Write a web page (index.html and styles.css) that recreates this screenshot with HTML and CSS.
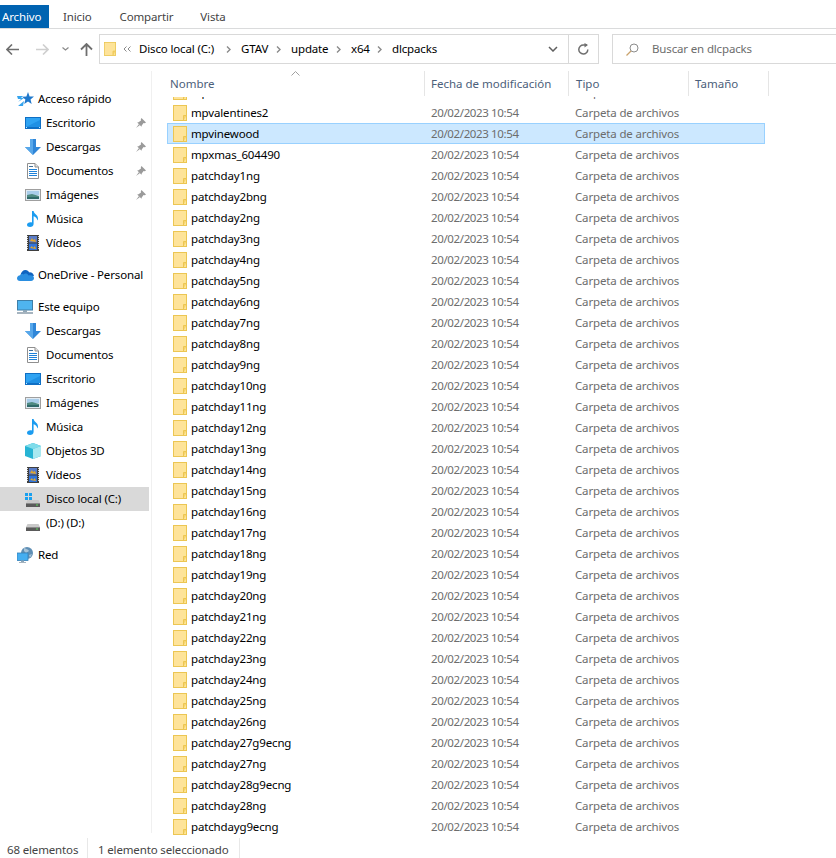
FILE: index.html
```html
<!DOCTYPE html>
<html lang="es">
<head>
<meta charset="utf-8">
<title>dlcpacks</title>
<link rel="stylesheet" href="styles.css">
</head>
<body>
<svg class="defs" width="0" height="0" aria-hidden="true">
  <defs>
    <symbol id="folder" viewBox="0 0 14 16">
      <rect x="0.5" y="0.5" width="13" height="15" fill="#fde597" stroke="#ecc653"/>
      <rect x="1" y="1" width="9" height="14" fill="#fee39a"/>
      <path d="M10.5 15.5V10.5H13.5" fill="#f6d36c" stroke="#ecc653"/>
    </symbol>
    <symbol id="star" viewBox="0 0 17 16">
      <path d="M11 1l1.600 4.400 4.400.2-3.500 2.900 1.200 4.500-3.700-2.600-3.800 2.600 1.200-4.400L5 5.700l4.400-.2z" fill="#1f78cc"/>
      <path d="M0 5h6L4 7h3L1 11l3-3H1zM1 15l6-5-1 5z" fill="#35a4ee"/>
    </symbol>
    <symbol id="desktop" viewBox="0 0 16 12">
      <rect x="0" y="0" width="16" height="12" fill="#0f6fc4"/>
      <rect x="1" y="1" width="14" height="9" fill="#2fa3f2"/>
      <path d="M1 10L15 3v7z" fill="#1f90e4"/>
      <rect x="1" y="10" width="1" height="1" fill="#bfe4ff"/><rect x="14" y="10" width="1" height="1" fill="#bfe4ff"/>
    </symbol>
    <symbol id="down" viewBox="0 0 16 16">
      <path d="M5 0h6v8h5l-8 8-8-8h5z" fill="#2f86d8"/>
      <path d="M5 0h3v16l-8-8h5z" fill="#57a7ea"/>
    </symbol>
    <symbol id="doc" viewBox="0 0 12 16">
      <path d="M.5.5h7.500l3.500 3.500v11.500h-11z" fill="#fff" stroke="#8f8f8f"/>
      <path d="M8 .5V4h3.500" fill="#e4e4e4" stroke="#8f8f8f"/>
      <path d="M2 6.500h8M2 8.500h8M2 10.500h8M2 12.500h8" stroke="#1f82d8"/>
      <path d="M2 3.500h4" stroke="#3d6f99"/>
    </symbol>
    <symbol id="pics" viewBox="0 0 16 12">
      <rect x=".5" y=".5" width="15" height="11" fill="#dfeaf3" stroke="#9f9f9f"/>
      <rect x="2" y="2" width="12" height="4" fill="#a9cdea"/>
      <path d="M2 6l5-1 7 2v3H2z" fill="#4f8a82"/>
      <path d="M2 8h12v2H2z" fill="#2f6a6a"/>
    </symbol>
    <symbol id="music" viewBox="0 0 12 16">
      <path d="M5 0h1.600c.4 3 4.400 3.500 4.400 7.500 0 1-.3 1.500-.7 2 .1-2.500-2-3.800-3.700-4.300V13c0 2-1.700 3-3.500 3C1.200 16 0 15 0 13.700s1.500-2.500 3.500-2.500c.6 0 1.100.1 1.500.3z" fill="#1b9cf0"/>
    </symbol>
    <symbol id="video" viewBox="0 0 12 16">
      <rect width="12" height="16" fill="#3f3f3f"/>
      <path d="M.5 1v14M11.500 1v14" stroke="#d8d8d8" stroke-dasharray="1 1"/>
      <rect x="2" y="1" width="8" height="6.500" fill="#5a7cc8"/>
      <rect x="2" y="8.500" width="8" height="6.500" fill="#2f74dc"/>
      <path d="M3 6l2-3 1 2 2-1 1 3zM3 13l2-2 1 2 2-2 1 3z" fill="#e0a52e"/>
    </symbol>
    <symbol id="cloud" viewBox="0 0 17 12">
      <path d="M3.500 6C4 3 6 1 8.500 1c1.800 0 3 1 3.700 2.400 2.400-.3 4.300 1.300 4.800 3.600H3.500z" fill="#0f64c0"/>
      <path d="M3 12C1 12 0 10.800 0 9.300 0 7.800 1.300 6.500 3.200 6.300 4 5 5.500 4.800 6.500 5.400 8 4 10.500 4.500 11.500 6.500c2-.4 5.500-.2 5.500 2.500 0 1.600-1.100 3-3 3z" fill="#2a8ee0"/>
    </symbol>
    <symbol id="pc" viewBox="0 0 16 14">
      <rect x=".5" y=".5" width="15" height="9.500" fill="#4fb4ef" stroke="#3f7fa8"/>
      <rect x="6" y="10" width="4" height="2" fill="#8fa7b8"/>
      <rect x="0" y="12" width="16" height="2" fill="#a6b4bf"/>
    </symbol>
    <symbol id="cube" viewBox="0 0 16 16">
      <path d="M8 0l8 3v10l-8 3-8-3V3z" fill="#27b4d4"/>
      <path d="M8 0l8 3-8 3-8-3z" fill="#7fdcea"/>
      <path d="M8 6l8-3v10l-8 3z" fill="#a8e8f0"/>
    </symbol>
    <symbol id="drive" viewBox="0 0 14 7">
      <path d="M1.500 0h11L14 3v4H0V3z" fill="#c9c9c9"/>
      <rect x="0" y="3" width="14" height="4" fill="#5a5a5a"/>
      <rect x="0" y="3" width="14" height="1" fill="#8a8a8a"/>
      <rect x="10" y="4.500" width="2" height="1" fill="#5bd85b"/>
    </symbol>
    <symbol id="win" viewBox="0 0 7 7">
      <path d="M0 0h3v3H0zM4 0h3v3H4zM0 4h3v3H0zM4 4h3v3H4z" fill="#19a0ef"/>
    </symbol>
    <symbol id="globe" viewBox="0 0 16 16">
      <circle cx="10" cy="6" r="6" fill="#5f8fb5"/>
      <path d="M7 1c2 1 4 1 5 3l-3 2-2-2zM12 8l3-1-2 4z" fill="#a8c4d8"/>
      <rect x="0" y="6" width="11" height="7.500" fill="#45aef0" stroke="#3380b8" stroke-width=".8"/>
      <rect x="4" y="13.500" width="3" height="1.500" fill="#8fa7b8"/>
      <rect x="2" y="15" width="7" height="1" fill="#a6b4bf"/>
    </symbol>
    <symbol id="pin" viewBox="0 0 10 10">
      <path d="M5.500 0L10 4.500 8.800 5.200 7.600 5 5.700 7.500 5.500 8.800 1.200 4.500 2.500 4.300 5 2.400 4.800 1.200z" fill="#9a9a9a"/>
      <path d="M0 10l3-4 1 1z" fill="#9a9a9a"/>
    </symbol>
    <symbol id="crumbsep" viewBox="0 0 5 7">
      <path d="M1 .5L4 3.500 1 6.500" fill="none" stroke="#8a8a8a" stroke-width="1.400"/>
    </symbol>
  </defs>
</svg>

<div class="app">
  <header class="ribbon">
    <span class="tab tab-active">Archivo</span>
    <span class="tab tab-inicio">Inicio</span>
    <span class="tab tab-compartir">Compartir</span>
    <span class="tab tab-vista">Vista</span>
  </header>

  <div class="navbar">
    <div class="nav-buttons">
      <svg class="nav-arrow" width="13" height="11" viewBox="0 0 13 11"><path d="M6 .5L1 5.500l5 5M1 5.500h12" fill="none" stroke="#6f6f6f" stroke-width="1.600"/></svg>
      <svg class="nav-arrow nav-forward" width="13" height="11" viewBox="0 0 13 11"><path d="M7 .5l5 5-5 5M12 5.500H0" fill="none" stroke="#cfcfcf" stroke-width="1.600"/></svg>
      <svg class="nav-recent" width="7" height="4" viewBox="0 0 7 4"><path d="M.5.500l3 2.500 3-2.500" fill="none" stroke="#8a8a8a" stroke-width="1.200"/></svg>
      <svg class="nav-up" width="13" height="13" viewBox="0 0 13 13"><path d="M1 6.500L6.500 1 12 6.500M6.500 1v12" fill="none" stroke="#6f6f6f" stroke-width="1.800"/></svg>
    </div>
    <div class="address">
      <svg class="addr-folder" width="12" height="16"><use href="#folder"/></svg>
      <svg class="crumb-more" width="8" height="6" viewBox="0 0 8 6"><path d="M3.500.5L1 3l2.500 2.500M7.500.5L5 3l2.500 2.500" fill="none" stroke="#8a8a8a"/></svg>
      <span class="crumb c1">Disco local (C:)</span><svg class="sep" width="5" height="7"><use href="#crumbsep"/></svg>
      <span class="crumb c2">GTAV</span><svg class="sep" width="5" height="7"><use href="#crumbsep"/></svg>
      <span class="crumb c3">update</span><svg class="sep" width="5" height="7"><use href="#crumbsep"/></svg>
      <span class="crumb c4">x64</span><svg class="sep" width="5" height="7"><use href="#crumbsep"/></svg>
      <span class="crumb c5">dlcpacks</span>
      <svg class="addr-chevron" width="10" height="6" viewBox="0 0 10 6"><path d="M1 1l4 4 4-4" fill="none" stroke="#5f5f5f" stroke-width="1.500"/></svg>
      <div class="refresh">
        <svg width="11" height="12" viewBox="0 0 11 12"><path d="M9.800 6.500A4.500 4.500 0 1 1 5.500 2H9" fill="none" stroke="#6f6f6f" stroke-width="1.500"/><path d="M6.500 0L10 2 6.500 4.500z" fill="#6f6f6f"/></svg>
      </div>
    </div>
    <div class="search">
      <svg width="13" height="13" viewBox="0 0 13 13"><circle cx="8" cy="5" r="4" fill="none" stroke="#8c8c8c"/><path d="M5 8l-4.500 4.500" stroke="#c9a26a" stroke-width="1.200"/></svg>
      <span class="search-text">Buscar en dlcpacks</span>
    </div>
  </div>

  <div class="main">
    <nav class="sidebar">
      <div class="group">
        <div class="item top"><svg class="ic" width="17" height="16"><use href="#star"/></svg><span>Acceso rápido</span></div>
        <div class="item"><svg class="ic" width="16" height="12"><use href="#desktop"/></svg><span>Escritorio</span><svg class="pin" width="10" height="10"><use href="#pin"/></svg></div>
        <div class="item"><svg class="ic" width="16" height="16"><use href="#down"/></svg><span>Descargas</span><svg class="pin" width="10" height="10"><use href="#pin"/></svg></div>
        <div class="item"><svg class="ic" width="16" height="16"><use href="#doc"/></svg><span>Documentos</span><svg class="pin" width="10" height="10"><use href="#pin"/></svg></div>
        <div class="item"><svg class="ic" width="16" height="12"><use href="#pics"/></svg><span>Imágenes</span><svg class="pin" width="10" height="10"><use href="#pin"/></svg></div>
        <div class="item"><svg class="ic" width="16" height="16"><use href="#music"/></svg><span>Música</span></div>
        <div class="item"><svg class="ic" width="16" height="16"><use href="#video"/></svg><span>Vídeos</span></div>
      </div>
      <div class="group">
        <div class="item top"><svg class="ic" width="17" height="12"><use href="#cloud"/></svg><span>OneDrive - Personal</span></div>
      </div>
      <div class="group">
        <div class="item top"><svg class="ic" width="16" height="14"><use href="#pc"/></svg><span>Este equipo</span></div>
        <div class="item"><svg class="ic" width="16" height="16"><use href="#down"/></svg><span>Descargas</span></div>
        <div class="item"><svg class="ic" width="16" height="16"><use href="#doc"/></svg><span>Documentos</span></div>
        <div class="item"><svg class="ic" width="16" height="12"><use href="#desktop"/></svg><span>Escritorio</span></div>
        <div class="item"><svg class="ic" width="16" height="12"><use href="#pics"/></svg><span>Imágenes</span></div>
        <div class="item"><svg class="ic" width="16" height="16"><use href="#music"/></svg><span>Música</span></div>
        <div class="item"><svg class="ic" width="16" height="16"><use href="#cube"/></svg><span>Objetos 3D</span></div>
        <div class="item"><svg class="ic" width="16" height="16"><use href="#video"/></svg><span>Vídeos</span></div>
        <div class="item item-selected">
          <div class="ic ic-stack"><svg class="ic-win" width="7" height="7"><use href="#win"/></svg><svg class="ic-drive" width="14" height="7"><use href="#drive"/></svg></div>
          <span>Disco local (C:)</span>
        </div>
        <div class="item"><div class="ic ic-stack"><svg class="ic-drive" width="14" height="7"><use href="#drive"/></svg></div><span>(D:) (D:)</span></div>
      </div>
      <div class="group">
        <div class="item top"><svg class="ic" width="16" height="16"><use href="#globe"/></svg><span>Red</span></div>
      </div>
    </nav>

    <section class="files">
      <div class="head">
        <svg class="sort" width="9" height="5" viewBox="0 0 9 5"><path d="M.5 4.500l4-4 4 4" fill="none" stroke="#a0a0a0"/></svg>
        <div class="hcol h-name">Nombre</div>
        <div class="hcol h-date">Fecha de modificación</div>
        <div class="hcol h-type">Tipo</div>
        <div class="hcol h-size">Tamaño</div>
      </div>
      <div class="list">
        <div class="row row-scrolled"><svg class="f" width="14" height="16"><use href="#folder"/></svg><span class="n">mpvalentines</span><span class="d">20/02/2023 10:54</span><span class="t">Carpeta de archivos</span></div>
        <div class="row"><svg class="f" width="14" height="16"><use href="#folder"/></svg><span class="n">mpvalentines2</span><span class="d">20/02/2023 10:54</span><span class="t">Carpeta de archivos</span></div>
        <div class="row row-selected"><svg class="f" width="14" height="16"><use href="#folder"/></svg><span class="n">mpvinewood</span><span class="d">20/02/2023 10:54</span><span class="t">Carpeta de archivos</span></div>
        <div class="row"><svg class="f" width="14" height="16"><use href="#folder"/></svg><span class="n">mpxmas_604490</span><span class="d">20/02/2023 10:54</span><span class="t">Carpeta de archivos</span></div>
        <div class="row"><svg class="f" width="14" height="16"><use href="#folder"/></svg><span class="n">patchday1ng</span><span class="d">20/02/2023 10:54</span><span class="t">Carpeta de archivos</span></div>
        <div class="row"><svg class="f" width="14" height="16"><use href="#folder"/></svg><span class="n">patchday2bng</span><span class="d">20/02/2023 10:54</span><span class="t">Carpeta de archivos</span></div>
        <div class="row"><svg class="f" width="14" height="16"><use href="#folder"/></svg><span class="n">patchday2ng</span><span class="d">20/02/2023 10:54</span><span class="t">Carpeta de archivos</span></div>
        <div class="row"><svg class="f" width="14" height="16"><use href="#folder"/></svg><span class="n">patchday3ng</span><span class="d">20/02/2023 10:54</span><span class="t">Carpeta de archivos</span></div>
        <div class="row"><svg class="f" width="14" height="16"><use href="#folder"/></svg><span class="n">patchday4ng</span><span class="d">20/02/2023 10:54</span><span class="t">Carpeta de archivos</span></div>
        <div class="row"><svg class="f" width="14" height="16"><use href="#folder"/></svg><span class="n">patchday5ng</span><span class="d">20/02/2023 10:54</span><span class="t">Carpeta de archivos</span></div>
        <div class="row"><svg class="f" width="14" height="16"><use href="#folder"/></svg><span class="n">patchday6ng</span><span class="d">20/02/2023 10:54</span><span class="t">Carpeta de archivos</span></div>
        <div class="row"><svg class="f" width="14" height="16"><use href="#folder"/></svg><span class="n">patchday7ng</span><span class="d">20/02/2023 10:54</span><span class="t">Carpeta de archivos</span></div>
        <div class="row"><svg class="f" width="14" height="16"><use href="#folder"/></svg><span class="n">patchday8ng</span><span class="d">20/02/2023 10:54</span><span class="t">Carpeta de archivos</span></div>
        <div class="row"><svg class="f" width="14" height="16"><use href="#folder"/></svg><span class="n">patchday9ng</span><span class="d">20/02/2023 10:54</span><span class="t">Carpeta de archivos</span></div>
        <div class="row"><svg class="f" width="14" height="16"><use href="#folder"/></svg><span class="n">patchday10ng</span><span class="d">20/02/2023 10:54</span><span class="t">Carpeta de archivos</span></div>
        <div class="row"><svg class="f" width="14" height="16"><use href="#folder"/></svg><span class="n">patchday11ng</span><span class="d">20/02/2023 10:54</span><span class="t">Carpeta de archivos</span></div>
        <div class="row"><svg class="f" width="14" height="16"><use href="#folder"/></svg><span class="n">patchday12ng</span><span class="d">20/02/2023 10:54</span><span class="t">Carpeta de archivos</span></div>
        <div class="row"><svg class="f" width="14" height="16"><use href="#folder"/></svg><span class="n">patchday13ng</span><span class="d">20/02/2023 10:54</span><span class="t">Carpeta de archivos</span></div>
        <div class="row"><svg class="f" width="14" height="16"><use href="#folder"/></svg><span class="n">patchday14ng</span><span class="d">20/02/2023 10:54</span><span class="t">Carpeta de archivos</span></div>
        <div class="row"><svg class="f" width="14" height="16"><use href="#folder"/></svg><span class="n">patchday15ng</span><span class="d">20/02/2023 10:54</span><span class="t">Carpeta de archivos</span></div>
        <div class="row"><svg class="f" width="14" height="16"><use href="#folder"/></svg><span class="n">patchday16ng</span><span class="d">20/02/2023 10:54</span><span class="t">Carpeta de archivos</span></div>
        <div class="row"><svg class="f" width="14" height="16"><use href="#folder"/></svg><span class="n">patchday17ng</span><span class="d">20/02/2023 10:54</span><span class="t">Carpeta de archivos</span></div>
        <div class="row"><svg class="f" width="14" height="16"><use href="#folder"/></svg><span class="n">patchday18ng</span><span class="d">20/02/2023 10:54</span><span class="t">Carpeta de archivos</span></div>
        <div class="row"><svg class="f" width="14" height="16"><use href="#folder"/></svg><span class="n">patchday19ng</span><span class="d">20/02/2023 10:54</span><span class="t">Carpeta de archivos</span></div>
        <div class="row"><svg class="f" width="14" height="16"><use href="#folder"/></svg><span class="n">patchday20ng</span><span class="d">20/02/2023 10:54</span><span class="t">Carpeta de archivos</span></div>
        <div class="row"><svg class="f" width="14" height="16"><use href="#folder"/></svg><span class="n">patchday21ng</span><span class="d">20/02/2023 10:54</span><span class="t">Carpeta de archivos</span></div>
        <div class="row"><svg class="f" width="14" height="16"><use href="#folder"/></svg><span class="n">patchday22ng</span><span class="d">20/02/2023 10:54</span><span class="t">Carpeta de archivos</span></div>
        <div class="row"><svg class="f" width="14" height="16"><use href="#folder"/></svg><span class="n">patchday23ng</span><span class="d">20/02/2023 10:54</span><span class="t">Carpeta de archivos</span></div>
        <div class="row"><svg class="f" width="14" height="16"><use href="#folder"/></svg><span class="n">patchday24ng</span><span class="d">20/02/2023 10:54</span><span class="t">Carpeta de archivos</span></div>
        <div class="row"><svg class="f" width="14" height="16"><use href="#folder"/></svg><span class="n">patchday25ng</span><span class="d">20/02/2023 10:54</span><span class="t">Carpeta de archivos</span></div>
        <div class="row"><svg class="f" width="14" height="16"><use href="#folder"/></svg><span class="n">patchday26ng</span><span class="d">20/02/2023 10:54</span><span class="t">Carpeta de archivos</span></div>
        <div class="row"><svg class="f" width="14" height="16"><use href="#folder"/></svg><span class="n">patchday27g9ecng</span><span class="d">20/02/2023 10:54</span><span class="t">Carpeta de archivos</span></div>
        <div class="row"><svg class="f" width="14" height="16"><use href="#folder"/></svg><span class="n">patchday27ng</span><span class="d">20/02/2023 10:54</span><span class="t">Carpeta de archivos</span></div>
        <div class="row"><svg class="f" width="14" height="16"><use href="#folder"/></svg><span class="n">patchday28g9ecng</span><span class="d">20/02/2023 10:54</span><span class="t">Carpeta de archivos</span></div>
        <div class="row"><svg class="f" width="14" height="16"><use href="#folder"/></svg><span class="n">patchday28ng</span><span class="d">20/02/2023 10:54</span><span class="t">Carpeta de archivos</span></div>
        <div class="row"><svg class="f" width="14" height="16"><use href="#folder"/></svg><span class="n">patchdayg9ecng</span><span class="d">20/02/2023 10:54</span><span class="t">Carpeta de archivos</span></div>
      </div>
    </section>
  </div>

  <footer class="status">
    <span class="st st-count">68 elementos</span>
    <span class="st st-sel">1 elemento seleccionado</span>
  </footer>
</div>
</body>
</html>
```

FILE: styles.css
```css
* { box-sizing: border-box; }
html, body { margin: 0; padding: 0; background: #fff; overflow: hidden; }
body { font-family: "Noto Sans", "Open Sans", sans-serif; font-size: 11.5px; letter-spacing: -0.15px; color: #000; }
.defs { display: block; height: 0; }
svg { display: block; flex: none; }
.app { width: 836px; height: 858px; display: flex; flex-direction: column; overflow: hidden; }

/* ribbon */
.ribbon { height: 29px; padding-top: 5px; border-bottom: 1px solid #dadbdc; display: flex; flex: none; color: #444; }
.tab { height: 23px; line-height: 24px; }
.tab-active { width: 49px; padding-left: 2px; background: #0063b1; color: #fff; }
.tab-inicio { margin-left: 14px; }
.tab-compartir { margin-left: 28px; }
.tab-vista { margin-left: 27px; }

/* nav */
.navbar { height: 42px; flex: none; padding-top: 5px; display: flex; align-items: flex-start; }
.nav-buttons { width: 99px; height: 30px; display: flex; align-items: center; padding-left: 6px; }
.nav-forward { margin-left: 17px; }
.nav-recent { margin-left: 13px; }
.nav-up { margin-left: 11px; }
.address { width: 500px; height: 30px; border: 1px solid #d9d9d9; display: flex; align-items: center; padding-left: 4px; }
.addr-folder { margin-right: 7px; }
.crumb-more { margin-right: 8px; }
.sep { margin: 0 10px 0 3px; }
.crumb { white-space: nowrap; padding-bottom: 2px; }
.c1 { width: 84px; }
.c2 { width: 32px; }
.c3 { width: 42px; }
.c4 { width: 23px; }
.c5 { width: 156px; }
.refresh { margin-left: auto; width: 30px; height: 28px; border-left: 1px solid #d9d9d9; display: flex; align-items: center; justify-content: center; }
.search { margin-left: 13px; flex: 1; height: 30px; border: 1px solid #d9d9d9; border-right: 0; display: flex; align-items: center; padding-left: 13px; gap: 13px; color: #6d6d6d; }
.search-text { padding-bottom: 2px; }

/* main */
.main { flex: 1; min-height: 0; display: flex; }
.sidebar { width: 152px; flex: none; padding: 16px 0 0; border-right: 1px solid #f0f0f0; margin-bottom: 5px; display: flex; flex-direction: column; gap: 8px; }
.item { width: 149px; height: 24px; display: flex; align-items: center; position: relative; white-space: nowrap; padding: 0 0 2px 46px; }
.item.top { padding-left: 38px; }
.ic { position: absolute; left: 25px; top: 50%; transform: translateY(-50%); }
.top .ic { left: 17px; }
.item-selected { background: #d9d9d9; }
.ic-stack { width: 16px; height: 16px; }
.ic-win { position: absolute; left: 0; top: 2px; }
.ic-drive { position: absolute; left: 1px; bottom: 0; }
.pin { position: absolute; left: 136px; top: 7px; }

/* files */
.files { flex: 1; min-width: 0; display: flex; flex-direction: column; position: relative; }
.head { height: 26px; flex: none; display: flex; color: #4c607a; position: relative; letter-spacing: 0; }
.sort { position: absolute; left: 139px; top: 0; }
.hcol { height: 25px; line-height: 26px; border-right: 1px solid #e5e5e5; padding-left: 6px; white-space: nowrap; }
.h-name { width: 273px; padding-left: 18px; }
.h-date { width: 144px; }
.h-type { width: 120px; padding-left: 7px; }
.h-size { width: 80px; }

.list { flex: 1; min-height: 0; overflow: hidden; padding-left: 15px; }
.row { width: 598px; height: 21px; display: grid; grid-template-columns: 18px 240px 144px 1fr; align-items: center; padding-left: 5px; border: 1px solid transparent; border-width: 0 1px; white-space: nowrap; }
.row-scrolled { margin-top: -16px; }
.row-selected { background: #cce8ff; border: 1px solid #99d1ff; }
.d, .t { color: #6d6d6d; }
.d { letter-spacing: -0.37px; }

/* status */
.status { height: 20px; flex: none; display: flex; align-items: center; color: #444; }
.st { display: block; height: 20px; line-height: 24px; border-right: 1px solid #e8e8e8; }
.st-count { width: 88px; padding-left: 7px; }
.st-sel { width: 152px; padding-left: 10px; }
```
